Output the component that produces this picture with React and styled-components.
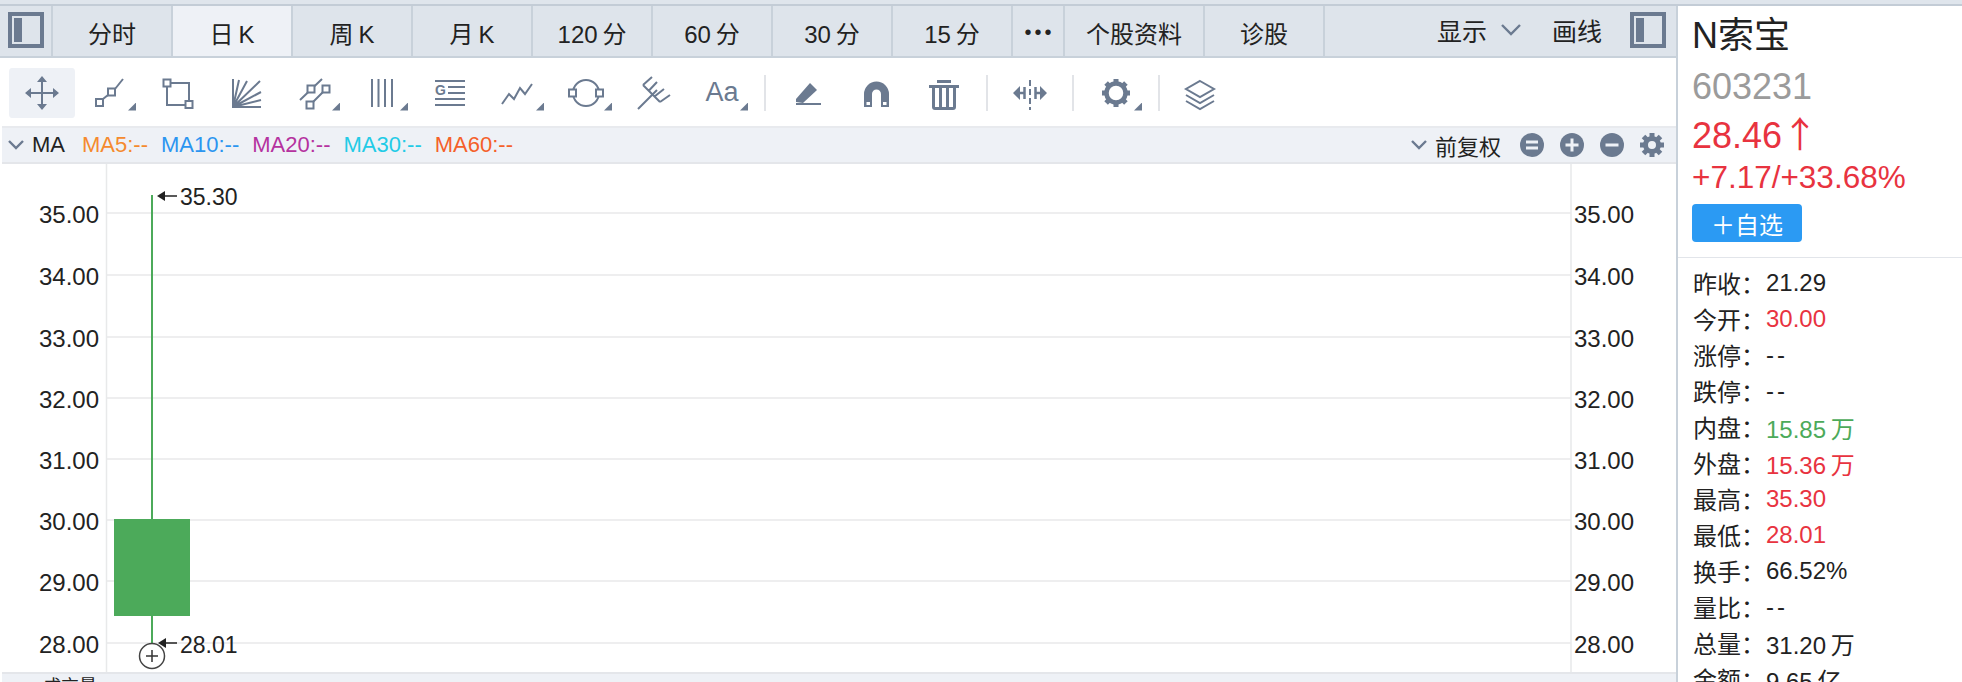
import React from 'react'
import styled, { createGlobalStyle } from 'styled-components'

const ICON = '#6b7a90'
const RED = '#e8333f'
const GREEN = '#4caa5a'
const FONT = `"Liberation Sans", "Noto Sans CJK SC", sans-serif`

const GlobalStyle = createGlobalStyle`
  html, body {
    margin: 0;
    height: 100%;
    overflow: hidden;
    background: #fff;
  }
  * { box-sizing: border-box; }
`

const Page = styled.div`
  width: 1962px;
  height: 682px;
  overflow: hidden;
  display: flex;
  flex-direction: column;
  font-family: ${FONT};
  color: #222;
`

const TopStrip = styled.div`
  flex: none;
  height: 6px;
  background: #dfe5ec;
  border-bottom: 2px solid #c3ccd6;
`

const Main = styled.div`
  flex: 1;
  min-height: 0;
  display: flex;
`

const LeftPane = styled.div`
  flex: none;
  width: 1676px;
  display: flex;
  flex-direction: column;
`

const TabBar = styled.div`
  flex: none;
  height: 52px;
  display: flex;
  background: #dee4eb;
  border-bottom: 2px solid #c8d1da;
`

const PanelCell = styled.div`
  flex: none;
  width: 53px;
  display: flex;
  align-items: center;
  padding: 0 0 2px 8px;
  border-right: 2px solid #c8d1da;
`

const Tab = styled.div`
  flex: none;
  width: ${(p) => p.$width || 120}px;
  height: 50px;
  padding-top: 2px;
  display: flex;
  align-items: center;
  justify-content: center;
  font-size: 24px;
  white-space: pre;
  background: ${(p) => (p.$active ? '#eef1f6' : 'transparent')};
  border-right: 2px solid #c8d1da;
`

const DotsTab = styled(Tab)`
  font-size: 20px;
  letter-spacing: 3px;
  padding-left: 3px;
`

const TabRight = styled.div`
  flex: 1;
  display: flex;
  align-items: center;
  justify-content: flex-end;
  padding: 0 10px 2px 0;
  font-size: 25px;
`

const TabLabel = styled.span`
  display: flex;
  margin-left: ${(p) => p.$gap || 0}px;
`

const ToolBar = styled.div`
  flex: none;
  height: 68px;
  display: flex;
  align-items: center;
  padding: 1px 0 0 8px;
`

const ToolBtn = styled.div`
  position: relative;
  flex: none;
  width: 68px;
  height: 50px;
  padding: 0 1px;
  display: flex;
  align-items: center;
  justify-content: center;
  border-radius: 4px;
  background: ${(p) => (p.$active ? '#eef1f6' : 'transparent')};
  background-clip: content-box;
`

const Corner = styled.span`
  position: absolute;
  right: 8px;
  bottom: 7px;
  width: 8px;
  height: 8px;
  background: ${ICON};
  clip-path: polygon(100% 0, 100% 100%, 0 100%);
`

const ToolSep = styled.span`
  flex: none;
  width: 2px;
  height: 36px;
  margin: 0 8px;
  background: #e2e4e8;
`

const AaText = styled.span`
  font-size: 27px;
  color: ${ICON};
`

const MaBar = styled.div`
  flex: none;
  height: 38px;
  margin-left: 2px;
  padding: 0 12px 0 6px;
  display: flex;
  align-items: center;
  background: #eef1f6;
  border-top: 2px solid #e8eaee;
  border-bottom: 2px solid #e4e6ea;
`

const MaName = styled.span`
  font-size: 22px;
  margin: 0 17px 0 8px;
`

const MaValue = styled.span`
  font-size: 22px;
  margin-right: 13px;
  color: ${(p) => p.$color};
`

const MaRight = styled.div`
  margin-left: auto;
  display: flex;
  align-items: center;
  gap: 16px;
`

const Adjust = styled.div`
  display: flex;
  align-items: center;
  gap: 8px;
  margin-right: 3px;
  font-size: 22px;
`

const ChartSvg = styled.svg`
  display: block;
  flex: none;
  width: 1676px;
  height: 508px;
`

const AxisText = styled.text`
  font-size: 24px;
  fill: #222;
`

const PriceMark = styled.text`
  font-size: 23px;
  fill: #222;
`

const VolumeBar = styled.div`
  flex: none;
  height: 40px;
  margin-left: 2px;
  padding: 3px 0 0 41px;
  background: #eef1f6;
  border-top: 2px solid #e4e6ea;
  font-size: 18px;
  line-height: 20px;
`

const SidePanel = styled.div`
  flex: 1;
  min-width: 0;
  border-left: 2px solid #c8d1da;
  overflow: hidden;
`

const Head = styled.div`
  padding: 0 0 15px 14px;
  border-bottom: 1px solid #e2e5ea;
`

const StockName = styled.div`
  font-size: 36px;
  line-height: 60px;
`

const StockCode = styled.div`
  font-size: 36px;
  line-height: 42px;
  color: #9b9b9b;
`

const Price = styled.div`
  height: 48px;
  font-size: 36px;
  line-height: 48px;
  color: ${RED};
`

const PriceArrow = styled.span`
  font-family: "Noto Sans CJK SC", sans-serif;
`

const Change = styled.div`
  font-size: 31.5px;
  line-height: 42px;
  color: ${RED};
`

const AddBtn = styled.div`
  width: 110px;
  height: 38px;
  margin-top: 6px;
  display: flex;
  align-items: center;
  justify-content: center;
  border-radius: 4px;
  background: #2b9af3;
  color: #fff;
  font-size: 24px;
`

const QuoteList = styled.div`
  padding: 6px 0 0 15px;
`

const QuoteRow = styled.div`
  display: flex;
  height: 36px;
  align-items: center;
  font-size: 24px;
  white-space: nowrap;
`

const QuoteLabel = styled.span`
  flex: none;
  width: 73px;
`

const QuoteValue = styled.span`
  padding-top: 2px;
  letter-spacing: ${(p) => (p.$dash ? '3px' : '0')};
  color: ${(p) => p.$color || '#222'};
`

const Stroke = ({ children, width = 2 }) => (
  <svg width="40" height="40" viewBox="0 0 40 40" fill="none" stroke={ICON} strokeWidth={width}>
    {children}
  </svg>
)

const Node = ({ x, y, s = 7 }) => <rect x={x - s / 2} y={y - s / 2} width={s} height={s} fill="#fff" />

const PanelIcon = () => (
  <svg width="36" height="36" viewBox="0 0 36 36">
    <rect x="2" y="2" width="32" height="32" fill="none" stroke={ICON} strokeWidth="4" />
    <rect x="6" y="6" width="8" height="24" fill={ICON} />
  </svg>
)

const Chevron = ({ w = 20, h = 10 }) => (
  <svg width={w} height={h + 2} viewBox={`0 0 ${w} ${h + 2}`} fill="none" stroke={ICON} strokeWidth="2.4">
    <path d={`M1 1 L${w / 2} ${h} L${w - 1} 1`} />
  </svg>
)

const tools = [
  {
    key: 'move',
    icon: (
      <Stroke>
        <path d="M20 6V34M6 20H34" />
        <path d="M20 3l5 6H15zM20 37l-5-6h10zM3 20l6-5v10zM37 20l-6 5V15z" fill={ICON} stroke="none" />
      </Stroke>
    ),
  },
  {
    key: 'line',
    corner: true,
    icon: (
      <Stroke>
        <path d="M13 26L18 22M25 16L33 6" />
        <Node x={9.5} y={29.5} />
        <Node x={21.5} y={19} />
      </Stroke>
    ),
  },
  {
    key: 'rect',
    icon: (
      <Stroke>
        <rect x="9" y="10" width="22" height="22" />
        <Node x={9} y={10} />
        <Node x={31} y={31.5} />
      </Stroke>
    ),
  },
  {
    key: 'fan',
    icon: (
      <Stroke>
        <path d="M7 6V34H35M7 34L13 7M7 34L21 8M7 34L34 8M7 34L35 19M7 34L35 27" />
      </Stroke>
    ),
  },
  {
    key: 'channel',
    corner: true,
    icon: (
      <Stroke>
        <path d="M6 27L28 6M16 32L32 16" />
        <Node x={17} y={16} />
        <Node x={32} y={16} />
        <Node x={16} y={32} />
      </Stroke>
    ),
  },
  {
    key: 'vlines',
    corner: true,
    icon: (
      <Stroke>
        <path d="M10 6V34M16.500 6V34M23 6V34M30 6V34" />
      </Stroke>
    ),
  },
  {
    key: 'fib',
    icon: (
      <Stroke>
        <path d="M5 8H35M18 14H35M18 20H35M5 26H35M5 32H35" />
        <text x="5" y="22" fontSize="14" fontWeight="700" fontFamily="Liberation Sans" fill={ICON} stroke="none">
          G
        </text>
      </Stroke>
    ),
  },
  {
    key: 'wave',
    corner: true,
    icon: (
      <Stroke>
        <path d="M4 31L11 21L16 26L22 15L27 21L34 11" />
      </Stroke>
    ),
  },
  {
    key: 'circle',
    corner: true,
    icon: (
      <Stroke>
        <circle cx="20" cy="20" r="13" />
        <Node x={6.500} y={20} />
        <Node x={33.500} y={20} />
      </Stroke>
    ),
  },
  {
    key: 'fork',
    icon: (
      <Stroke>
        <path d="M4 36L23 17M9 12L26 29M9 12L18 4M15 17.500L23 9M20.500 23.500L30 16M26 29L36 22" />
      </Stroke>
    ),
  },
  { key: 'text', corner: true, icon: <AaText>Aa</AaText> },
  { sep: true, key: 's1' },
  {
    key: 'eraser',
    icon: (
      <Stroke>
        <path d="M8 31H33" />
        <path d="M8 26L22 10L29 17L15 30L8 29z" fill={ICON} stroke="none" />
      </Stroke>
    ),
  },
  {
    key: 'magnet',
    icon: (
      <svg width="40" height="40" viewBox="0 0 40 40">
        <path d="M8 34V21a12.500 12.500 0 0 1 25 0V34H25V21a4.500 4.500 0 0 0-9 0V34z" fill={ICON} />
        <rect x="10.500" y="29" width="3.500" height="3" fill="#fff" />
        <rect x="27" y="29" width="3.500" height="3" fill="#fff" />
      </svg>
    ),
  },
  {
    key: 'trash',
    icon: (
      <svg width="40" height="40" viewBox="0 0 40 40">
        <path d="M13 7H27V10H13zM5 12H35V15H5z" fill={ICON} />
        <path d="M9.500 15V34a1.500 1.500 0 0 0 1.500 1.500H29a1.500 1.500 0 0 0 1.500-1.500V15" fill="none" stroke={ICON} strokeWidth="3" />
        <path d="M16.500 15V35M23.500 15V35" stroke={ICON} strokeWidth="3" />
      </svg>
    ),
  },
  { sep: true, key: 's2' },
  {
    key: 'stretch',
    icon: (
      <svg width="40" height="40" viewBox="0 0 40 40">
        <path d="M20 7V37" stroke={ICON} strokeWidth="2" strokeDasharray="6 3" />
        <path d="M3 20L10 13V27zM37 20L30 27V13z" fill={ICON} />
        <path d="M10 20H15M25 20H30M14.500 14V26M25.500 14V26" stroke={ICON} strokeWidth="2.500" />
      </svg>
    ),
  },
  { sep: true, key: 's3' },
  {
    key: 'gear',
    corner: true,
    icon: (
      <svg width="40" height="40" viewBox="0 0 40 40">
        <circle cx="20" cy="20" r="9.500" fill="none" stroke={ICON} strokeWidth="4.500" />
        {[0, 45, 90, 135, 180, 225, 270, 315].map((a) => (
          <rect key={a} x="17.500" y="6" width="5" height="5" fill={ICON} transform={`rotate(${a} 20 20)`} />
        ))}
      </svg>
    ),
  },
  { sep: true, key: 's4' },
  {
    key: 'layers',
    icon: (
      <Stroke>
        <path d="M18 8L32 16L18 24L4 16z" />
        <path d="M4 22L18 30L32 22M4 28L18 36L32 28" />
      </Stroke>
    ),
  },
]

const tabs = [
  ['分时'],
  ['日\u2009K', 120, true],
  ['周\u2009K'],
  ['月\u2009K'],
  ['120\u2009分'],
  ['60\u2009分'],
  ['30\u2009分'],
  ['15\u2009分'],
]

const maValues = [
  ['MA5:--', '#f58a2e'],
  ['MA10:--', '#2b95f0'],
  ['MA20:--', '#b5329f'],
  ['MA30:--', '#22cbe6'],
  ['MA60:--', '#f5602a'],
]

const gridLines = [
  [213, '35.00'],
  [275, '34.00'],
  [337, '33.00'],
  [398, '32.00'],
  [459, '31.00'],
  [520, '30.00'],
  [581, '29.00'],
  [643, '28.00'],
]

const quotes = [
  ['昨收：', '21.29'],
  ['今开：', '30.00', RED],
  ['涨停：', '--'],
  ['跌停：', '--'],
  ['内盘：', '15.85\u2009万', GREEN],
  ['外盘：', '15.36\u2009万', RED],
  ['最高：', '35.30', RED],
  ['最低：', '28.01', RED],
  ['换手：', '66.52%'],
  ['量比：', '--'],
  ['总量：', '31.20\u2009万'],
  ['金额：', '9.65\u2009亿'],
]

const RoundBtn = ({ d }) => (
  <svg width="24" height="24" viewBox="0 0 24 24">
    <circle cx="12" cy="12" r="12" fill={ICON} />
    <path d={d} stroke="#eef1f6" strokeWidth="3" fill="none" />
  </svg>
)

const SmallGear = () => (
  <svg width="24" height="24" viewBox="0 0 24 24">
    <circle cx="12" cy="12" r="6.500" fill="none" stroke={ICON} strokeWidth="5" />
    {[0, 45, 90, 135, 180, 225, 270, 315].map((a) => (
      <rect key={a} x="9.500" y="0" width="5" height="5" fill={ICON} transform={`rotate(${a} 12 12)`} />
    ))}
  </svg>
)

const Chart = () => (
  <ChartSvg viewBox="0 164 1676 508">
    {gridLines.map(([y]) => (
      <line key={y} x1="106" x2="1571" y1={y} y2={y} stroke="#e8e9ea" strokeWidth="1.500" />
    ))}
    <path d="M106.500 164V672M1571 164V672" stroke="#e8e9ea" strokeWidth="1.500" />
    {gridLines.map(([y, label]) => (
      <g key={label}>
        <AxisText x="99" y={y + 10} textAnchor="end">
          {label}
        </AxisText>
        <AxisText x="1574" y={y + 10}>
          {label}
        </AxisText>
      </g>
    ))}
    <line x1="152" x2="152" y1="195" y2="644" stroke={GREEN} strokeWidth="2" />
    <rect x="114" y="519" width="76" height="97" fill={GREEN} />
    <path d="M159 196H177" stroke="#222" strokeWidth="1.500" />
    <path d="M157 196l8-5v10z" fill="#222" />
    <PriceMark x="180" y="205">35.30</PriceMark>
    <path d="M160 643H177" stroke="#222" strokeWidth="1.500" />
    <path d="M158 643l8-5v10z" fill="#222" />
    <PriceMark x="180" y="653">28.01</PriceMark>
    <circle cx="152" cy="656" r="12.500" fill="#fff" stroke="#444" strokeWidth="1.500" />
    <path d="M146 656H158M152 650V662" stroke="#333" strokeWidth="1.500" />
  </ChartSvg>
)

export default function App() {
  return (
    <Page>
      <GlobalStyle />
      <TopStrip />
      <Main>
        <LeftPane>
          <TabBar>
            <PanelCell>
              <PanelIcon />
            </PanelCell>
            {tabs.map(([label, width, active]) => (
              <Tab key={label} $width={width} $active={active}>
                {label}
              </Tab>
            ))}
            <DotsTab $width={52}>•••</DotsTab>
            <Tab $width={140}>个股资料</Tab>
            <Tab>诊股</Tab>
            <TabRight>
              <TabLabel>显示</TabLabel>
              <TabLabel $gap={14}>
                <Chevron />
              </TabLabel>
              <TabLabel $gap={31}>画线</TabLabel>
              <TabLabel $gap={28}>
                <PanelIcon />
              </TabLabel>
            </TabRight>
          </TabBar>

          <ToolBar>
            {tools.map((t) =>
              t.sep ? (
                <ToolSep key={t.key} />
              ) : (
                <ToolBtn key={t.key} $active={t.key === 'move'}>
                  {t.icon}
                  {t.corner && <Corner />}
                </ToolBtn>
              )
            )}
          </ToolBar>

          <MaBar>
            <Chevron w={16} h={8} />
            <MaName>MA</MaName>
            {maValues.map(([text, color]) => (
              <MaValue key={text} $color={color}>
                {text}
              </MaValue>
            ))}
            <MaRight>
              <Adjust>
                <Chevron w={16} h={8} />
                前复权
              </Adjust>
              <RoundBtn d="M6 9H18M6 15H18" />
              <RoundBtn d="M5.500 12H18.500M12 5.500V18.500" />
              <RoundBtn d="M5.500 12H18.500" />
              <SmallGear />
            </MaRight>
          </MaBar>

          <Chart />

          <VolumeBar>成交量</VolumeBar>
        </LeftPane>

        <SidePanel>
          <Head>
            <StockName>N索宝</StockName>
            <StockCode>603231</StockCode>
            <Price>
              28.46<PriceArrow>↑</PriceArrow>
            </Price>
            <Change>+7.17/+33.68%</Change>
            <AddBtn>＋自选</AddBtn>
          </Head>
          <QuoteList>
            {quotes.map(([label, value, color]) => (
              <QuoteRow key={label}>
                <QuoteLabel>{label}</QuoteLabel>
                <QuoteValue $color={color} $dash={value === '--'}>
                  {value}
                </QuoteValue>
              </QuoteRow>
            ))}
          </QuoteList>
        </SidePanel>
      </Main>
    </Page>
  )
}
